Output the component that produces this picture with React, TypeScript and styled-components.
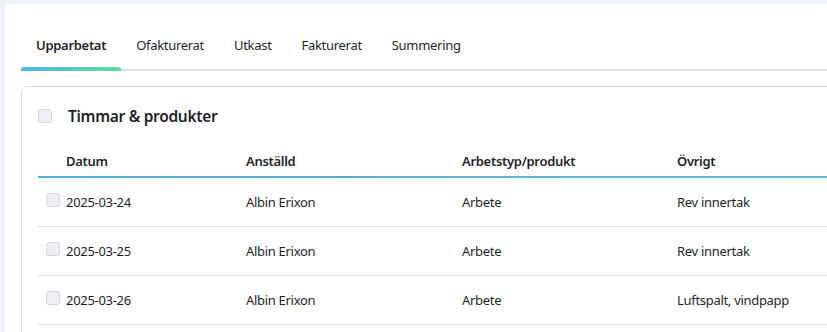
import React from "react";
import styled, { createGlobalStyle } from "styled-components";

const Global = createGlobalStyle`
  html, body { margin: 0; padding: 0; background: #edf1f8; overflow: hidden; }
  body { font-family: "Noto Sans", "Open Sans", sans-serif; color: #1f1f2b; letter-spacing: -0.3px; }
`;

const Page = styled.div`
  padding: 4px 0 0 5px;
  width: 900px;
  height: 328px;
`;

const Card = styled.div`
  background: #fff;
  border-top-left-radius: 6px;
  padding: 16px 0 40px 16px;
`;

const TabBar = styled.div`
  display: flex;
  border-bottom: 2px solid #dcdce4;
`;

const Tab = styled.div<{ $active?: boolean }>`
  position: relative;
  padding: 16px 15px 15px;
  font-size: 13px;
  line-height: 18px;
  font-weight: ${(p) => (p.$active ? 600 : 400)};
  color: #1f1f2b;
  &::after {
    content: "";
    display: ${(p) => (p.$active ? "block" : "none")};
    position: absolute;
    left: 0;
    right: 0;
    bottom: -2px;
    height: 4px;
    border-radius: 3px 3px 0 0;
    background: linear-gradient(90deg, #4fb3e6, #62dc9e);
  }
`;

const Panel = styled.div`
  margin-top: 15px;
  border: 1px solid #dcdce4;
  border-top-left-radius: 6px;
  padding: 0 0 40px 16px;
`;

const TitleRow = styled.div`
  display: flex;
  align-items: center;
  gap: 16px;
  height: 58px;
`;

const Check = styled.span<{ $inset?: number }>`
  display: inline-block;
  width: 12px;
  height: 12px;
  margin-left: ${(p) => p.$inset ?? 0}px;
  border: 1px solid #d6d6e2;
  border-radius: 3px;
  background: #eeeef6;
`;

const Title = styled.h2`
  margin: 0;
  font-size: 15.5px;
  font-weight: 600;
  color: #1f1f2b;
`;

const Row = styled.div<{ $head?: boolean }>`
  display: grid;
  grid-template-columns: 28px 180px 216px 215px 1fr;
  align-items: center;
  height: ${(p) => (p.$head ? "31px" : "48px")};
  font-size: 13px;
  font-weight: ${(p) => (p.$head ? 600 : 400)};
  border-bottom: ${(p) => (p.$head ? "2px solid transparent" : "1px solid #dcdce4")};
  border-image: ${(p) => (p.$head ? "linear-gradient(90deg, #49b0e4, #5ac0cc) 1" : "none")};
`;

const Cell = styled.div`
  white-space: nowrap;
`;

const rows = [
  ["2025-03-24", "Albin Erixon", "Arbete", "Rev innertak"],
  ["2025-03-25", "Albin Erixon", "Arbete", "Rev innertak"],
  ["2025-03-26", "Albin Erixon", "Arbete", "Luftspalt, vindpapp"],
];

export default function App() {
  return (
    <>
      <Global />
      <Page>
        <Card>
          <TabBar>
            <Tab $active>Upparbetat</Tab>
            <Tab>Ofakturerat</Tab>
            <Tab>Utkast</Tab>
            <Tab>Fakturerat</Tab>
            <Tab>Summering</Tab>
          </TabBar>
          <Panel>
            <TitleRow>
              <Check />
              <Title>Timmar &amp; produkter</Title>
            </TitleRow>
            <Row $head>
              <Cell />
              <Cell>Datum</Cell>
              <Cell>Anställd</Cell>
              <Cell>Arbetstyp/produkt</Cell>
              <Cell>Övrigt</Cell>
            </Row>
            {rows.map((r) => (
              <Row key={r[0]}>
                <Cell>
                  <Check $inset={8} />
                </Cell>
                {r.map((c, i) => (
                  <Cell key={i}>{c}</Cell>
                ))}
              </Row>
            ))}
          </Panel>
        </Card>
      </Page>
    </>
  );
}
